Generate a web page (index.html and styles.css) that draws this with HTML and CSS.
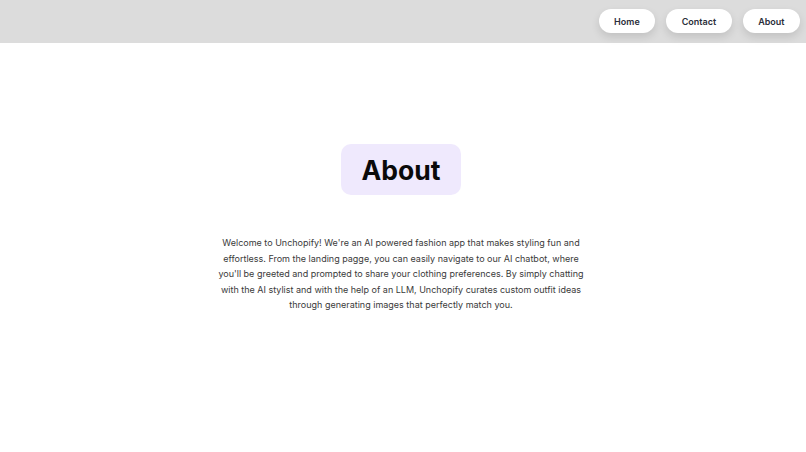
FILE: index.html
```html
<!DOCTYPE html>
<html>
<head>
<meta charset="utf-8">
<link rel="stylesheet" href="styles.css">
</head>
<body>
<header class="topbar">
  <nav class="nav">
    <a class="nav-btn">Home</a>
    <a class="nav-btn">Contact</a>
    <a class="nav-btn">About</a>
  </nav>
</header>
<main class="content">
  <h1 class="title">About</h1>
  <p class="text">Welcome to Unchopify! We're an AI powered fashion app that makes styling fun and effortless. From the landing pagge, you can easily navigate to our AI chatbot, where you'll be greeted and prompted to share your clothing preferences. By simply chatting with the AI stylist and with the help of an LLM, Unchopify curates custom outfit ideas through generating images that perfectly match you.</p>
</main>
</body>
</html>
```
FILE: styles.css
```css
* { box-sizing: border-box; }
html, body { margin: 0; padding: 0; background: #ffffff; font-family: Inter, "Liberation Sans", sans-serif; }
.topbar {
  height: 43px;
  background: #dcdcdc;
  display: flex;
  justify-content: flex-end;
  align-items: flex-start;
  padding: 9px 6px 0 0;
}
.nav { display: flex; gap: 11px; }
.nav-btn {
  display: flex;
  align-items: center;
  justify-content: center;
  height: 24px;
  padding: 0 15.5px;
  background: #ffffff;
  border-radius: 12px;
  font-size: 9px;
  font-weight: 600;
  color: #2a2e3a;
  box-shadow: 0 4px 8px rgba(0,0,0,0.12);
}
.content {
  display: flex;
  flex-direction: column;
  align-items: center;
  padding: 101px 4px 0 0;
}
.title {
  margin: 0;
  background: #efe9fd;
  border-radius: 10px;
  width: 120px;
  height: 51px;
  display: flex;
  align-items: center;
  justify-content: center;
  font-size: 26.5px;
  font-weight: 700;
  color: #0a0a0a;
}
.text {
  margin: 40px 0 0;
  width: 374px;
  text-align: center;
  font-size: 9px;
  line-height: 15.5px;
  color: #3a3a3a;
}
```
